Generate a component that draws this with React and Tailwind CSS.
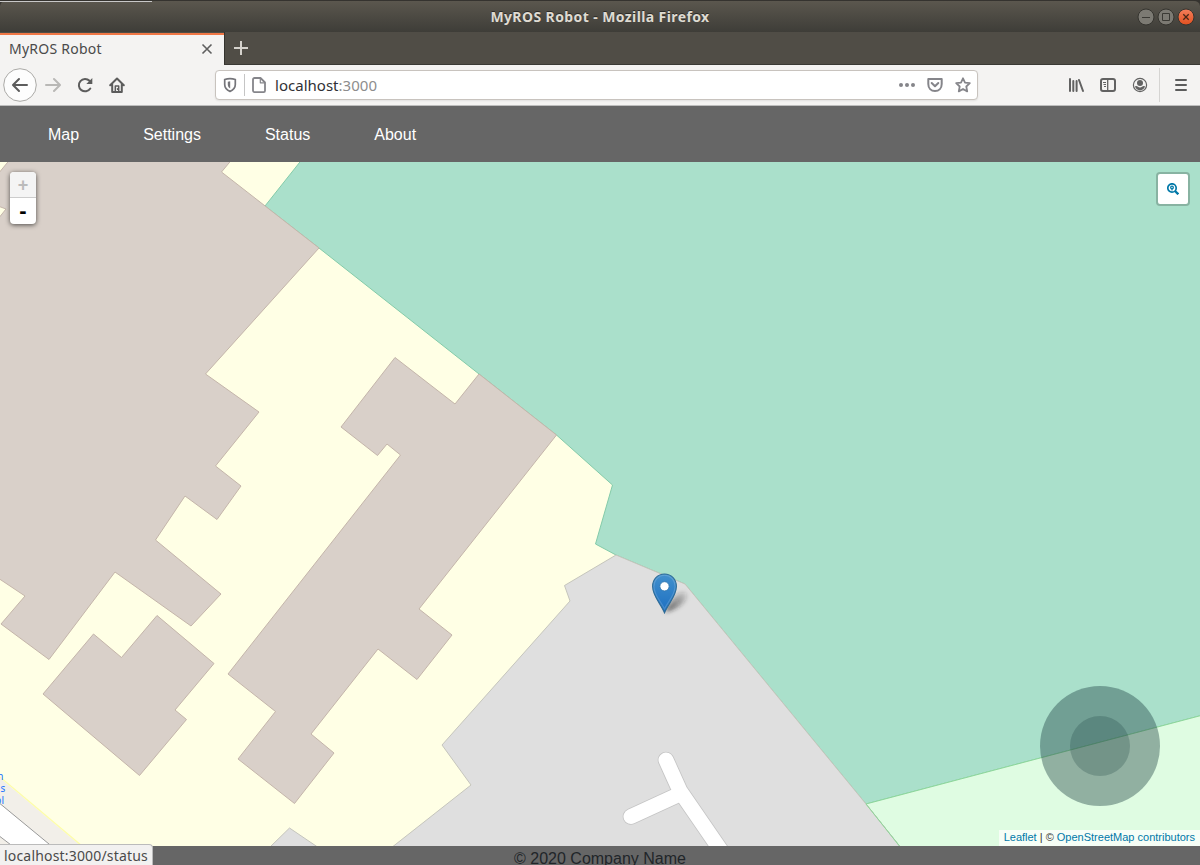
import React from "react";

const UI = "font-['Noto_Sans','Open_Sans',sans-serif]";

function TitleBar() {
  return (
    <header className="relative flex h-8 shrink-0 items-center justify-end rounded-t-md border-t border-[#35332f] bg-linear-to-b from-[#5b574e] to-[#3e3d38] pr-[5px] pt-px">
      <div className="absolute left-0 top-0 h-px w-[152px] bg-[#c8c8c8]" />
      <h1 className="absolute inset-x-0 top-[6px] text-center font-['Noto_Sans','Open_Sans',sans-serif] text-[14px] leading-[20px] font-bold tracking-[0.4px] text-[#dfdbd2] [text-shadow:0_-1px_0_#2b2a27]">
        MyROS Robot - Mozilla Firefox
      </h1>
      <div className="flex gap-[2px]">
        <svg className="size-[18px]" viewBox="0 0 18 18">
          <circle cx="9" cy="9" r="8" fill="#7c7a73" stroke="#35342f" />
          <path d="M5 9.5h8" stroke="#3b3a35" />
        </svg>
        <svg className="size-[18px]" viewBox="0 0 18 18">
          <circle cx="9" cy="9" r="8" fill="#7c7a73" stroke="#35342f" />
          <path d="M5.5 5.5h7v7h-7z" fill="none" stroke="#3b3a35" />
        </svg>
        <svg className="size-[18px]" viewBox="0 0 18 18">
          <defs>
            <linearGradient id="closeFill" x2="0" y2="1">
              <stop stopColor="#f47f5c" />
              <stop offset="1" stopColor="#e2501f" />
            </linearGradient>
          </defs>
          <circle cx="9" cy="9" r="8" fill="url(#closeFill)" stroke="#35342f" />
          <path d="M6.3 6.3l5.4 5.4M11.7 6.3l-5.4 5.4" stroke="#4a2717" strokeWidth="1.3" />
        </svg>
      </div>
    </header>
  );
}

function TabStrip() {
  return (
    <div className="flex h-[33px] shrink-0 border-b border-[#3a3934] bg-[#504d46]">
      <div className="-mb-px mt-px flex w-[224px] items-center justify-between border-t-2 border-[#f07746] bg-[#f4f3f2] pb-[2px] pl-[9px] pr-[10px]">
        <span className={`${UI} text-[14px] leading-[20px] tracking-[0.24px] text-[#4a4a4a]`}>MyROS Robot</span>
        <svg className="size-[14px]" viewBox="0 0 14 14" fill="none" stroke="#5f5f5f" strokeWidth="1.6">
          <path d="M2.5 2.5l9 9M11.5 2.5l-9 9" />
        </svg>
      </div>
      <div className="w-px bg-[#34332e]" />
      <svg className="ml-[8px] mt-[8px] size-4" viewBox="0 0 16 16" stroke="#d5d2cc" strokeWidth="2">
        <path d="M1 8h14M8 1v14" />
      </svg>
    </div>
  );
}

function AddressBar() {
  return (
    <div className="ml-[90px] flex h-[30px] w-[763px] items-center rounded-[4px] border border-[#c8c3be] bg-white pl-[6px] pr-[6px] shadow-[0_1px_2px_rgba(0,0,0,0.08)]">
      <svg className="size-4" viewBox="0 0 16 16" fill="none" stroke="#75757a" strokeWidth="1.7">
        <path d="M8 1.7c2 0 3.8.3 5.3.8v5.1c0 3.3-2.2 5.5-5.3 6.8-3.1-1.3-5.3-3.5-5.3-6.8V2.500C4.200 2 6 1.700 8 1.700z" />
        <path d="M5.800 4.800L8.200 4.300v7.200C6.700 10.500 5.800 9.500 5.800 7.500z" fill="#75757a" stroke="none" />
      </svg>
      <div className="ml-[6px] h-[22px] w-px bg-[#c5c5c5]" />
      <svg className="ml-[6px] size-4" viewBox="0 0 16 16" fill="none" stroke="#85858a" strokeWidth="1.8" strokeLinejoin="round">
        <path d="M3.500 1h6l4.500 4.500v8.300a1.300 1.300 0 0 1-1.300 1.300H3.500A1.500 1.500 0 0 1 2 13.500v-11A1.500 1.500 0 0 1 3.500 1z" />
        <path d="M9.300 1.500v4.300h4.300" strokeWidth="1.200" />
      </svg>
      <span className={`${UI} ml-[8px] text-[15px] leading-[20px] tracking-[0.02px] text-[#303035]`}>
        localhost<span className="text-[#8d8d8d]">:3000</span>
      </span>
      <div className="ml-auto flex items-center gap-3">
        <svg className="size-4" viewBox="0 0 16 16" fill="#85858a">
          <circle cx="2" cy="8" r="2" />
          <circle cx="8" cy="8" r="2" />
          <circle cx="14" cy="8" r="2" />
        </svg>
        <svg className="size-4" viewBox="0 0 16 16" fill="none" stroke="#85858a" strokeWidth="2" strokeLinejoin="round">
          <path d="M1.300 2h13.400v5c0 4-2.700 7-6.700 7s-6.700-3-6.700-7z" />
          <path d="M4.700 6L8 9.300 11.300 6" strokeLinecap="round" />
        </svg>
        <svg className="size-4" viewBox="0 0 16 16" fill="none" stroke="#85858a" strokeWidth="1.800" strokeLinejoin="round">
          <path d="M8 1.300l2 4.300 4.800.6-3.500 3.300.9 4.900L8 12l-4.200 2.400.9-4.900L1.200 6.200 6 5.600z" />
        </svg>
      </div>
    </div>
  );
}

function Toolbar() {
  return (
    <div className="flex h-[41px] shrink-0 items-center border-b border-[#bdbdbd] bg-[#f4f3f2] pl-[3px] pr-[11px]">
      <svg className="size-[34px]" viewBox="0 0 34 34" fill="none">
        <circle cx="17" cy="17" r="16.300" fill="#fdfdfd" stroke="#aaa9a6" />
        <path d="M24 17H10.500M16 11L10 17l6 6" stroke="#5c5c5c" strokeWidth="2" strokeLinecap="round" strokeLinejoin="round" />
      </svg>
      <svg className="ml-2 size-4" viewBox="0 0 16 16" fill="none" stroke="#b9b8b6" strokeWidth="2" strokeLinecap="round" strokeLinejoin="round">
        <path d="M1 8h13.500M9 2l6 6-6 6" />
      </svg>
      <svg className="ml-4 size-4" viewBox="0 0 16 16" fill="none" stroke="#5c5c5c" strokeWidth="2">
        <path d="M13.300 11.500A6.200 6.200 0 1 1 12.500 3.800" strokeLinecap="round" />
        <path d="M15.300 1v6H9.300z" fill="#5c5c5c" stroke="none" />
      </svg>
      <svg className="ml-4 size-4" viewBox="0 0 16 16" fill="none" stroke="#5c5c5c" strokeWidth="2" strokeLinejoin="round" strokeLinecap="round">
        <path d="M1.200 8.300L8 1.500l6.800 6.800M3.200 7.500V15h9.600V7.500" />
        <path d="M6.300 14V9h3.400v5" strokeWidth="1.500" />
        <path d="M8.500 11.500v1" strokeWidth="1.200" />
      </svg>
      <AddressBar />
      <div className="ml-auto flex items-center">
        <svg className="size-4" viewBox="0 0 16 16" stroke="#626262" strokeWidth="2" strokeLinecap="round">
          <path d="M2 2v12M5.300 4v10M8.600 4v10M11 3l4 11" fill="none" />
        </svg>
        <svg className="ml-4 size-4" viewBox="0 0 16 16" fill="none" stroke="#626262" strokeWidth="2">
          <rect x="1" y="2" width="14" height="12" rx="2" />
          <path d="M7.700 2v12" strokeWidth="1.300" />
          <path d="M3 5.500h3M3.500 7.500H6M4 9.500h2" strokeWidth="1" />
        </svg>
        <svg className="ml-4 size-4" viewBox="0 0 16 16" fill="none" stroke="#626262">
          <circle cx="8" cy="8" r="6.600" strokeWidth="1.200" />
          <circle cx="8" cy="6" r="3" fill="#626262" stroke="none" />
          <path d="M3 9.500c1-.7 2-.6 3 .3 1.200.8 2.800.8 4 0 1-.9 2-1 3-.3-.6 2.300-2.700 3.900-5 3.900s-4.400-1.600-5-3.900z" fill="#626262" stroke="none" />
        </svg>
        <div className="ml-[11px] h-[34px] w-px bg-[#d5d4d2]" />
        <svg className="ml-[13px] size-4" viewBox="0 0 16 16" stroke="#5c5c5c" strokeWidth="2" strokeLinecap="round">
          <path d="M3 3h10M3 8h10M3 13h10" />
        </svg>
      </div>
    </div>
  );
}

function SiteNav() {
  return (
    <nav className="flex h-14 shrink-0 items-center gap-16 bg-[#666] pl-12 pt-[2px] font-['Liberation_Sans',sans-serif] text-[16px] leading-6 text-white">
      <a>Map</a>
      <a>Settings</a>
      <a>Status</a>
      <a>About</a>
    </nav>
  );
}

/* Map geometry is in window coordinates; the map pane starts at y=162. */
function MapDrawing() {
  return (
    <svg className="block h-[684px] w-[1200px]" viewBox="0 162 1200 684">
      <defs>
        <linearGradient id="pinFill" x2="0" y2="1">
          <stop stopColor="#4290cd" />
          <stop offset="1" stopColor="#1c6fc1" />
        </linearGradient>
        <filter id="pinBlur" x="-50%" y="-50%" width="200%" height="200%">
          <feGaussianBlur stdDeviation="2" />
        </filter>
        <linearGradient id="pinShade" x1="0" y1="1" x2="1" y2="0">
          <stop stopColor="#222" stopOpacity=".7" />
          <stop offset="1" stopColor="#222" stopOpacity=".1" />
        </linearGradient>
      </defs>
      <rect y="162" width="1200" height="684" fill="#ffffe5" />
      <path d="M301.500 160L265 206 319 248 479 374 556.500 435 612.500 485 595.500 544 616 555 685 584 866 804 1203 715V160z" fill="#aae0cb" stroke="#84cba9" />
      <path d="M866 804L1203 715v134H902z" fill="#dffce2" stroke="#8dd69a" />
      <g fill="#dfdfdf" stroke="#c5c5bc">
        <path d="M616 555L564.500 585.500 570 601 442 745 471 785 391 848H901L866 804 685 584z" />
        <path d="M269 848L289.500 828 319 848z" />
      </g>
      <path d="M866 804L901 848" stroke="#91d49a" fill="none" />
      <g fill="#d9d0c9" stroke="#c4b5aa" strokeWidth="1">
        <path d="M9.500 160L-2 174V206L6 209-2 219V578L25 596 1 624 49 659.500 115 572 191 626 221 594 155.500 540 185 496 217 519.500 241 486 215.500 466 259 412 205.500 374 319 248 221.500 172 231.500 160z" />
        <path d="M395 357.500L341 427 377.500 455.500 387 444 400.500 455 228 674 275.500 711.500 238 759 294.500 803.500 334 753 311 734 378 649 417 679.500 452 635 419 609 556.500 435 479 374 455 404z" />
        <path d="M93.500 634L121.500 657.500 157 615.500 214 663.500 175 710 186.500 719.500 139.500 775.500 43 694z" />
      </g>
      <path d="M0 778L81 846H0z" fill="#f2efe9" />
      <path d="M0 777L82 846" stroke="#fdfda9" strokeWidth="1.300" />
      <path d="M-2 802L52 846.500H13L-2 835z" fill="#fff" stroke="#999" />
      <g fill="none" strokeLinecap="round" strokeLinejoin="round">
        <path d="M666 760L680 791 724 855M680 794L631 816.500" stroke="#c5c5c5" strokeWidth="16.600" />
        <path d="M666 760L680 791 724 855M680 794L631 816.500" stroke="#fff" strokeWidth="15" />
      </g>
      <g fill="#1a73ff" fontFamily="Noto Sans, sans-serif" fontSize="10" textAnchor="end">
        <text x="3.500" y="779.500">n</text>
        <text x="5.300" y="791.500">s</text>
        <text x="4" y="803.500">ol</text>
      </g>
      <path d="M665 612C669 604 675 594 682 592c7-1 6 7 0 12-4 4-11 7-17 8z" fill="url(#pinShade)" filter="url(#pinBlur)" />
      <path d="M664.500 612.800C661 604 652.600 596 652.600 586.500 652.600 579 658 574 664.500 574s11.900 5 11.900 12.500C676.400 596 668 604 664.500 612.800z" fill="url(#pinFill)" stroke="#2e6c97" strokeWidth="1.100" />
      <path d="M664.500 609C661 601.500 653.900 595 653.900 586.500c0-6.500 4.800-11.300 10.600-11.300s10.600 4.800 10.600 11.300c0 8.500-7.100 15-10.600 22.500z" fill="none" stroke="#fff" strokeOpacity=".16" strokeWidth="1.100" />
      <circle cx="664.500" cy="586.300" r="4.600" fill="#fff" stroke="#2d75ad" strokeWidth=".8" />
    </svg>
  );
}

function MapPane() {
  return (
    <main className="relative h-[684px] shrink-0 overflow-hidden">
      <MapDrawing />
      <div className="absolute left-[10px] top-[10px] flex w-[26px] flex-col overflow-visible rounded-[4px] bg-white shadow-[0_1px_5px_rgba(0,0,0,0.65)]">
        <button className="flex h-[26px] items-center justify-center rounded-t-[4px] border-b border-[#ccc] bg-[#f4f4f4] font-['Liberation_Sans',sans-serif] text-[18px] leading-none font-bold text-[#bbb]">+</button>
        <button className="flex h-[26px] items-center justify-center rounded-b-[4px] font-['Liberation_Sans',sans-serif] text-[22px] leading-none font-bold text-black">-</button>
      </div>
      <button className="absolute right-[10px] top-[10px] flex size-[34px] items-center justify-center rounded-[4px] border-2 border-black/20 bg-white bg-clip-padding">
        <svg className="size-3" viewBox="0 0 12 12" fill="none" stroke="#0078a8">
          <circle cx="5" cy="5" r="4.200" strokeWidth="1.700" />
          <path d="M8 8l3.300 3.300" strokeWidth="2.300" />
          <circle cx="5" cy="4.500" r="1.300" strokeWidth="1.300" />
          <path d="M5 5.500v2" strokeWidth="1.100" />
        </svg>
      </button>
      <div className="absolute bottom-10 right-10 flex size-[120px] items-center justify-center rounded-full bg-[#1b3f40]/40">
        <div className="size-[60px] rounded-full bg-[#1b3f40]/25" />
      </div>
      <div className="absolute bottom-0 right-0 h-4 bg-white/70 px-[5px] font-['Liberation_Sans',sans-serif] text-[11px] leading-[14px] whitespace-nowrap text-[#333]">
        <a className="text-[#0078a8]">Leaflet</a> | © <a className="text-[#0078a8]">OpenStreetMap contributors</a>
      </div>
    </main>
  );
}

export default function App() {
  return (
    <div className="relative flex h-[865px] w-[1200px] flex-col overflow-hidden bg-[#35332f]">
      <TitleBar />
      <TabStrip />
      <Toolbar />
      <SiteNav />
      <MapPane />
      <footer className="h-[19px] shrink-0 overflow-hidden bg-[#666] pt-px text-center font-['Liberation_Sans',sans-serif] text-[16px] leading-6 text-[#212529]">
        © 2020 Company Name
      </footer>
      <div className={`${UI} absolute bottom-0 left-0 h-[21px] w-[153px] rounded-tr-[4px] border-r border-t border-[#bbb] bg-[#f2f1f0] pl-1 text-[14px] leading-[21px] tracking-[0.18px] whitespace-nowrap text-[#4a4a4a]`}>
        localhost:3000/status
      </div>
    </div>
  );
}
